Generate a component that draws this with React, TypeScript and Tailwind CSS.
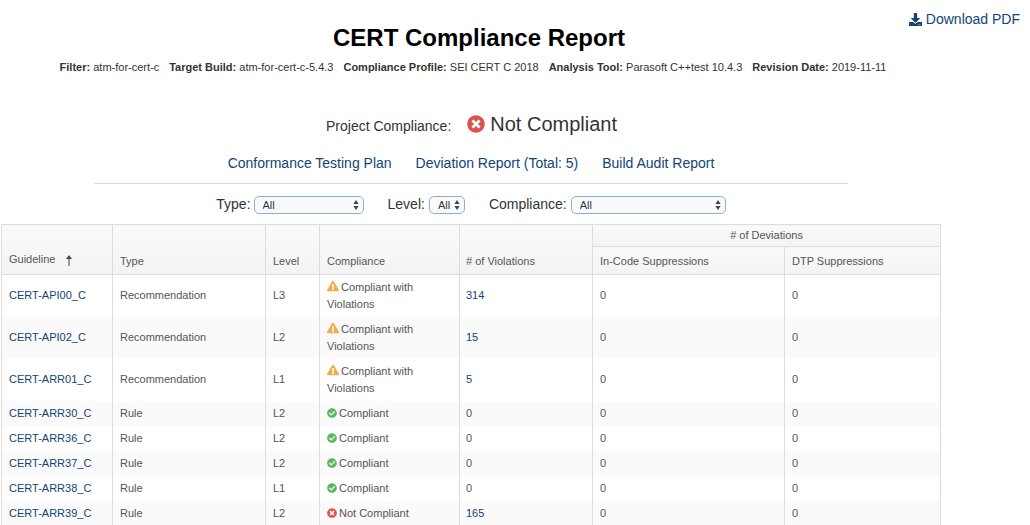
import { FaCheckCircle, FaDownload, FaExclamationTriangle, FaTimesCircle } from "react-icons/fa";

type Status = "warn" | "ok" | "bad";
type Row = { g: string; t: string; l: string; s: Status; v: string };

const rows: Row[] = [
  { g: "CERT-API00_C", t: "Recommendation", l: "L3", s: "warn", v: "314" },
  { g: "CERT-API02_C", t: "Recommendation", l: "L2", s: "warn", v: "15" },
  { g: "CERT-ARR01_C", t: "Recommendation", l: "L1", s: "warn", v: "5" },
  { g: "CERT-ARR30_C", t: "Rule", l: "L2", s: "ok", v: "0" },
  { g: "CERT-ARR36_C", t: "Rule", l: "L2", s: "ok", v: "0" },
  { g: "CERT-ARR37_C", t: "Rule", l: "L2", s: "ok", v: "0" },
  { g: "CERT-ARR38_C", t: "Rule", l: "L1", s: "ok", v: "0" },
  { g: "CERT-ARR39_C", t: "Rule", l: "L2", s: "bad", v: "165" },
];

function Meta({ k, v }: { k: string; v: string }) {
  return (
    <span>
      <b className="font-bold">{k}</b> {v}
    </span>
  );
}

function Pick({ w }: { w: string }) {
  return (
    <span className={`${w} relative mt-[1px] inline-block`}>
      <select className="block h-[18px] w-full appearance-none rounded-[5px] border border-[#85b1de] bg-[#fafafa] pl-[8px] text-[11px] leading-[16px] text-[#333] outline-none">
        <option>All</option>
      </select>
      <svg className="absolute right-[5px] top-[3px] h-[12px] w-[6px]" viewBox="0 0 6 12" fill="#444">
        <path d="M3 1 L5.6 5 H0.4 Z M3 11 L0.4 7 H5.6 Z" />
      </svg>
    </span>
  );
}

function Compliance({ s }: { s: Status }) {
  if (s === "warn") {
    return (
      <span>
        <FaExclamationTriangle className="mr-[2px] inline-block align-[-1px] text-[12px] text-[#f0ad4e]" />
        Compliant with Violations
      </span>
    );
  }
  if (s === "ok") {
    return (
      <span>
        <FaCheckCircle className="mr-[2px] inline-block align-[-1px] text-[10px] text-[#5cb85c]" />
        Compliant
      </span>
    );
  }
  return (
    <span>
      <FaTimesCircle className="mr-[2px] inline-block align-[-1px] text-[10px] text-[#d9534f]" />
      Not Compliant
    </span>
  );
}

const th =
  "border border-[#dddddd] bg-[linear-gradient(#fafafa,#f3f3f3)] px-[7px] font-normal text-left align-bottom pb-[5px] text-[11px] leading-[15px] text-[#555]";
const td = "border-x border-[#dddddd] px-[7px] align-middle";

export default function App() {
  return (
    <div className="relative h-[525px] w-[1030px] overflow-hidden bg-white font-['Liberation_Sans',Arial,sans-serif] text-[#333]">
      <a className="absolute right-[10px] top-[10px] flex items-center gap-[4px] text-[14px] leading-[18px] text-[#114477]">
        <FaDownload className="text-[13px] text-[#114477]" />
        Download PDF
      </a>

      <div className="w-[942px]">
        <h1 className="pl-[16px] pt-[24px] text-center text-[24px] font-bold leading-[28px] text-black">
          CERT Compliance Report
        </h1>
        <div className="mt-[7px] flex justify-center gap-[10px] pl-[4px] text-[11px] leading-[16px] text-[#333]">
          <Meta k="Filter:" v="atm-for-cert-c" />
          <Meta k="Target Build:" v="atm-for-cert-c-5.4.3" />
          <Meta k="Compliance Profile:" v="SEI CERT C 2018" />
          <Meta k="Analysis Tool:" v="Parasoft C++test 10.4.3" />
          <Meta k="Revision Date:" v="2019-11-11" />
        </div>

        <div className="mt-[33px] flex h-[32px] items-center justify-center">
          <span className="mt-[4px] pl-[1px] text-[14px] text-[#333]">Project Compliance:</span>
          <FaTimesCircle className="ml-[16px] text-[18px] text-[#d9534f]" />
          <span className="ml-[5px] text-[20px] text-[#333]">Not Compliant</span>
        </div>

        <div className="mt-[14px] flex justify-center gap-[24px] text-[14px] leading-[18px] text-[#114477]">
          <a>Conformance Testing Plan</a>
          <a>Deviation Report (Total: 5)</a>
          <a>Build Audit Report</a>
        </div>

        <div className="mx-[94px] mt-[11px] border-t border-[#dddddd]" />

        <div className="mt-[11px] flex h-[18px] items-center justify-center text-[14px] text-[#333]">
          <span>Type:</span>
          <span className="ml-[3px] mr-[24px] flex"><Pick w="w-[110px]" /></span>
          <span>Level:</span>
          <span className="ml-[4px] mr-[24px] flex"><Pick w="w-[36px]" /></span>
          <span>Compliance:</span>
          <span className="ml-[4px] flex"><Pick w="w-[155px]" /></span>
        </div>
      </div>

      <table className="ml-[1px] mt-[11px] w-[939px] table-fixed border-collapse text-[11px] leading-[17px] text-[#555]">
        <colgroup>
          <col className="w-[111px]" />
          <col className="w-[153px]" />
          <col className="w-[54px]" />
          <col className="w-[140px]" />
          <col className="w-[133px]" />
          <col className="w-[192px]" />
          <col className="w-[156px]" />
        </colgroup>
        <thead>
          <tr className="h-[22px]">
            <th rowSpan={2} className={th}>
              <span className="relative top-[-2px] flex items-center gap-[10px]">
                Guideline
                <svg className="relative top-[1px] h-[11px] w-[8px]" viewBox="0 0 8 11" fill="#444">
                  <path d="M4 0 L7 4 H4.5 V11 H3.5 V4 H1 Z" />
                </svg>
              </span>
            </th>
            <th rowSpan={2} className={th}>Type</th>
            <th rowSpan={2} className={th}>Level</th>
            <th rowSpan={2} className={th}>Compliance</th>
            <th rowSpan={2} className={`${th} !pl-[6px]`}># of Violations</th>
            <th colSpan={2} className={`${th} !pb-[3px] !text-center`}># of Deviations</th>
          </tr>
          <tr className="h-[28px]">
            <th className={th}>In-Code Suppressions</th>
            <th className={th}>DTP Suppressions</th>
          </tr>
        </thead>
        <tbody>
          {rows.map((r, i) => (
            <tr key={r.g} className={`${r.s === "warn" ? "h-[42px]" : "h-[25px]"} ${i % 2 === 1 ? "bg-[#fafafa]" : "bg-white"}`}>
              <td className={td}><a className="text-[#114477]">{r.g}</a></td>
              <td className={td}>{r.t}</td>
              <td className={td}>{r.l}</td>
              <td className={td}><Compliance s={r.s} /></td>
              <td className={`${td} !pl-[6px]`}>
                {r.v === "0" ? "0" : <a className="text-[#114477]">{r.v}</a>}
              </td>
              <td className={td}>0</td>
              <td className={td}>0</td>
            </tr>
          ))}
        </tbody>
      </table>
    </div>
  );
}
